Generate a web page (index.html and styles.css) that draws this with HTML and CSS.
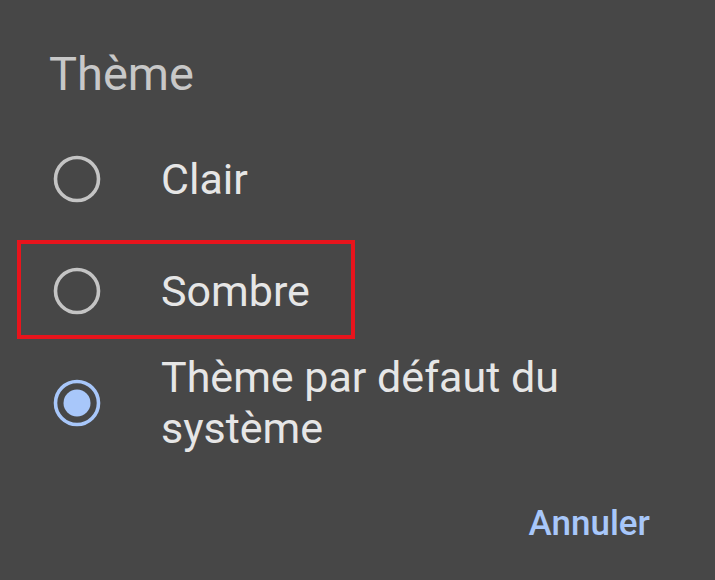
FILE: index.html
```html
<!DOCTYPE html>
<html lang="fr">
<head>
<meta charset="utf-8">
<link rel="stylesheet" href="styles.css">
</head>
<body>
<div class="dialog">
  <div class="title">Thème</div>
  <div class="options">
    <div class="row">
      <svg class="radio" viewBox="0 0 48 48"><circle cx="24" cy="24" r="21.5" fill="none" stroke="#c4c4c4" stroke-width="3.6"/></svg>
      <div class="label">Clair</div>
    </div>
    <div class="row highlighted">
      <svg class="radio" viewBox="0 0 48 48"><circle cx="24" cy="24" r="21.5" fill="none" stroke="#c4c4c4" stroke-width="3.6"/></svg>
      <div class="label">Sombre</div>
      <div class="annot"></div>
    </div>
    <div class="row">
      <svg class="radio" viewBox="0 0 48 48"><circle cx="24" cy="24" r="21.5" fill="none" stroke="#a8c7fa" stroke-width="3.6"/><circle cx="24" cy="24" r="13.5" fill="#a8c7fa"/></svg>
      <div class="label">Thème par défaut du<br>système</div>
    </div>
  </div>
  <div class="actions"><span class="btn">Annuler</span></div>
</div>
</body>
</html>
```
FILE: styles.css
```css
html, body {
  margin: 0;
  padding: 0;
  background: #474747;
}
body {
  width: 715px;
  height: 580px;
  overflow: hidden;
  font-family: Roboto, "Noto Sans", sans-serif;
}
.dialog {
  padding-top: 46px;
}
.title {
  padding-left: 49px;
  font-size: 47px;
  line-height: 56px;
  color: #c8c8c8;
}
.options {
  margin-top: 21px;
  display: flex;
  flex-direction: column;
}
.row {
  position: relative;
  display: flex;
  align-items: center;
  min-height: 112px;
  padding: 5px 0;
  box-sizing: border-box;
}
.radio {
  width: 48px;
  height: 48px;
  margin-left: 53px;
  flex: none;
}
.label {
  margin-left: 60px;
  font-size: 43px;
  line-height: 51px;
  color: #e6e6e6;
}
.annot {
  position: absolute;
  left: 17px;
  top: 5px;
  width: 338px;
  height: 99px;
  border: 4px solid #e8141c;
  box-sizing: border-box;
}
.actions {
  margin-top: 45px;
  display: flex;
  justify-content: flex-end;
  padding-right: 65px;
}
.btn {
  font-size: 35px;
  line-height: 40px;
  font-weight: 500;
  color: #a8c7fa;
}
```
